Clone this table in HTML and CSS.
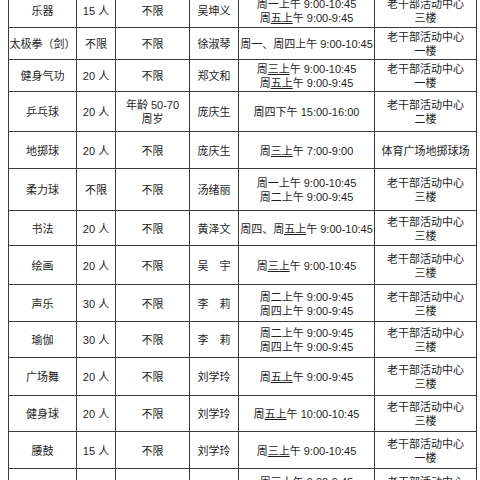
FILE: index.html
```html
<!DOCTYPE html>
<html lang="zh-CN">
<head>
<meta charset="utf-8">
<title>活动安排</title>
<link rel="stylesheet" href="styles.css">
</head>
<body>
<table class="sched">
  <colgroup>
    <col class="c-name"><col class="c-num"><col class="c-age"><col class="c-tea"><col class="c-time"><col class="c-place">
  </colgroup>
  <tbody>
    <tr class="h34"><td>乐器</td><td>15 人</td><td>不限</td><td>吴坤义</td><td>周一上午 9:00-10:45<br>周<span class="u">五上</span>午 9:00-9:45</td><td>老干部活动中心<br>三楼</td></tr>
    <tr class="h32"><td>太极拳（剑）</td><td>不限</td><td>不限</td><td>徐淑琴</td><td>周一、周四上午 9:00-10:45</td><td>老干部活动中心<br>一楼</td></tr>
    <tr class="h32"><td>健身气功</td><td>20 人</td><td>不限</td><td>郑文和</td><td>周<span class="u">三上</span>午 9:00-10:45<br>周<span class="u">五上</span>午 9:00-9:45</td><td>老干部活动中心<br>一楼</td></tr>
    <tr class="h40"><td>乒乓球</td><td>20 人</td><td>年龄 50-70<br>周岁</td><td>庞庆生</td><td>周四下午 15:00-16:00</td><td>老干部活动中心<br>二楼</td></tr>
    <tr class="h37"><td>地掷球</td><td>20 人</td><td>不限</td><td>庞庆生</td><td>周<span class="u">三上</span>午 7:00-9:00</td><td>体育广场地掷球场</td></tr>
    <tr class="h42"><td>柔力球</td><td>不限</td><td>不限</td><td>汤绪丽</td><td>周一上午 9:00-10:45<br>周二上午 9:00-9:45</td><td>老干部活动中心<br>三楼</td></tr>
    <tr class="h35"><td>书法</td><td>20 人</td><td>不限</td><td>黄泽文</td><td>周四、周<span class="u">五上</span>午 9:00-10:45</td><td>老干部活动中心<br>三楼</td></tr>
    <tr class="h39"><td>绘画</td><td>20 人</td><td>不限</td><td>吴　宇</td><td>周<span class="u">三上</span>午 9:00-10:45</td><td>老干部活动中心<br>三楼</td></tr>
    <tr class="h37"><td>声乐</td><td>30 人</td><td>不限</td><td>李　莉</td><td>周二上午 9:00-9:45<br>周四上午 9:00-9:45</td><td>老干部活动中心<br>三楼</td></tr>
    <tr class="h36"><td>瑜伽</td><td>30 人</td><td>不限</td><td>李　莉</td><td>周二上午 9:00-9:45<br>周四上午 9:00-9:45</td><td>老干部活动中心<br>三楼</td></tr>
    <tr class="h38"><td>广场舞</td><td>20 人</td><td>不限</td><td>刘学玲</td><td>周<span class="u">五上</span>午 9:00-9:45</td><td>老干部活动中心<br>三楼</td></tr>
    <tr class="h36"><td>健身球</td><td>20 人</td><td>不限</td><td>刘学玲</td><td>周<span class="u">五上</span>午 10:00-10:45</td><td>老干部活动中心<br>三楼</td></tr>
    <tr class="h37"><td>腰鼓</td><td>15 人</td><td>不限</td><td>刘学玲</td><td>周<span class="u">三上</span>午 9:00-10:45</td><td>老干部活动中心<br>一楼</td></tr>
    <tr class="h40"><td>合唱</td><td>30 人</td><td>不限</td><td>刘学玲</td><td>周<span class="u">三上</span>午 9:00-9:45<br>周五上午 9:00-9:45</td><td>老干部活动中心<br>三楼</td></tr>
  </tbody>
</table>
</body>
</html>
```

FILE: styles.css
```css
html, body {
  background: #ffffff;
}
body {
  margin: 0 0 0 8px;
  font-family: "Liberation Sans", "Noto Sans CJK SC", sans-serif;
  font-size: 11px;
  line-height: 14px;
  color: #1e1e1e;
}
.sched {
  border-collapse: collapse;
  table-layout: fixed;
  width: 469px;
  margin-top: -7px;
}
.sched td {
  border: 1px solid #3a3a3a;
  text-align: center;
  vertical-align: middle;
  padding: 1px 0 0 0;
  white-space: nowrap;
  overflow: hidden;
}
.c-name { width: 68px; }
.c-num { width: 39px; }
.c-age { width: 74px; }
.c-tea { width: 49px; }
.c-time { width: 136px; }
.c-place { width: 102px; }

.u {
  text-decoration: underline;
  text-underline-offset: 1px;
}

.h32 td { height: 30px; }
.h34 td { height: 32px; }
.h35 td { height: 33px; }
.h36 td { height: 34px; }
.h37 td { height: 35px; }
.h38 td { height: 36px; }
.h39 td { height: 37px; }
.h40 td { height: 38px; }
.h42 td { height: 40px; }
```
